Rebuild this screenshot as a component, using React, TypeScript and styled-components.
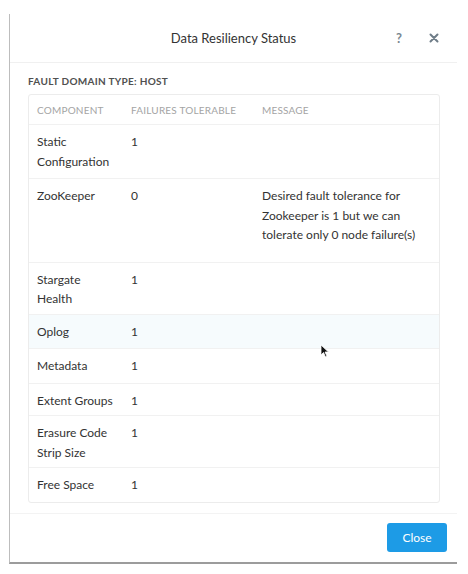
import styled, { createGlobalStyle } from "styled-components";

const GlobalStyle = createGlobalStyle`
  html, body {
    margin: 0;
    padding: 0;
    background: #ffffff;
  }
  body {
    font-family: Lato, "Open Sans", "Liberation Sans", sans-serif;
    color: #333;
  }
`;

const Page = styled.div`
  width: 468px;
  height: 574px;
  padding: 14px 0 0 9px;
  box-sizing: border-box;
`;

const Modal = styled.div`
  width: 448px;
  box-sizing: border-box;
  display: flex;
  flex-direction: column;
  background: #fff;
  border-left: 1px solid #bdbdbd;
  border-bottom: 2px solid #9c9c9c;
`;

const Header = styled.div`
  height: 48px;
  flex: 0 0 48px;
  display: flex;
  align-items: center;
  justify-content: center;
  position: relative;
  border-bottom: 1px solid #f0f0f0;
`;

const Title = styled.div`
  font-size: 13px;
  color: #333;
`;

const HeaderActions = styled.div`
  position: absolute;
  right: 16px;
  top: 0;
  height: 100%;
  display: flex;
  align-items: center;
  gap: 21px;
`;

const IconButton = styled.span`
  font-size: 13px;
  font-weight: 700;
  color: #7b8790;
  width: 14px;
  display: flex;
  justify-content: center;
`;

const Body = styled.div`
  padding: 12px 17px 10px 18px;
  border-bottom: 1px solid #f3f3f3;
`;

const DomainLabel = styled.div`
  font-size: 10px;
  font-weight: 700;
  color: #505050;
  letter-spacing: 0.3px;
  text-transform: uppercase;
  margin-bottom: 7px;
`;

const Table = styled.div`
  border: 1px solid #ececec;
  border-radius: 3px;
  overflow: hidden;
`;

const Row = styled.div<{ $highlight?: boolean; $padBottom?: number }>`
  display: grid;
  grid-template-columns: 94px 131px 1fr;
  padding: 7px 8px ${({ $padBottom }) => $padBottom ?? 7}px 8px;
  background: ${({ $highlight }) => ($highlight ? "#f6fbfd" : "transparent")};
  border-bottom: 1px solid #f1f1f1;
  &:last-child {
    border-bottom: none;
  }
`;

const HeadRow = styled(Row)`
  padding: 9px 8px 7px 8px;
`;

const HeadCell = styled.div`
  font-size: 10px;
  color: #a4a4a4;
  text-transform: uppercase;
  letter-spacing: 0.2px;
  line-height: 13px;
`;

const Cell = styled.div`
  font-size: 12px;
  line-height: 19.5px;
  color: #333;
  padding-right: 14px;
`;

const Footer = styled.div`
  height: 48px;
  flex: 0 0 48px;
  display: flex;
  align-items: center;
  justify-content: flex-end;
  padding-right: 10px;
`;

const CloseButton = styled.button`
  width: 60px;
  height: 29px;
  border: none;
  border-radius: 3px;
  background: #1d9be6;
  color: #fff;
  font-family: inherit;
  font-size: 12px;
`;

const Cursor = styled.svg`
  position: absolute;
  left: 320px;
  top: 344px;
`;

const rows: {
  component: string;
  failures: string;
  message?: string;
  highlight?: boolean;
  padBottom?: number;
}[] = [
  { component: "Static Configuration", failures: "1" },
  {
    component: "ZooKeeper",
    failures: "0",
    message:
      "Desired fault tolerance for Zookeeper is 1 but we can tolerate only 0 node failure(s)",
    padBottom: 17,
  },
  { component: "Stargate Health", failures: "1", padBottom: 5 },
  { component: "Oplog", failures: "1", highlight: true },
  { component: "Metadata", failures: "1" },
  { component: "Extent Groups", failures: "1", padBottom: 5 },
  { component: "Erasure Code Strip Size", failures: "1", padBottom: 5 },
  { component: "Free Space", failures: "1" },
];

export default function App() {
  return (
    <Page>
      <GlobalStyle />
      <Modal>
        <Header>
          <Title>Data Resiliency Status</Title>
          <HeaderActions>
            <IconButton>?</IconButton>
            <IconButton>
              <svg width="10" height="10" viewBox="0 0 10 10">
                <path
                  d="M1.5 1.5 L8.5 8.5 M8.5 1.5 L1.5 8.5"
                  stroke="#6f7d88"
                  strokeWidth="2"
                  strokeLinecap="round"
                />
              </svg>
            </IconButton>
          </HeaderActions>
        </Header>
        <Body>
          <DomainLabel>Fault Domain Type: Host</DomainLabel>
          <Table>
            <HeadRow>
              <HeadCell>Component</HeadCell>
              <HeadCell>Failures Tolerable</HeadCell>
              <HeadCell>Message</HeadCell>
            </HeadRow>
            {rows.map((r) => (
              <Row key={r.component} $highlight={r.highlight} $padBottom={r.padBottom}>
                <Cell>{r.component}</Cell>
                <Cell>{r.failures}</Cell>
                <Cell>{r.message}</Cell>
              </Row>
            ))}
          </Table>
        </Body>
        <Footer>
          <CloseButton>Close</CloseButton>
        </Footer>
      </Modal>
      <Cursor width="10" height="14" viewBox="0 0 10 14">
        <path d="M1 1 L1 11 L3.5 8.5 L5.5 13 L7 12.3 L5 8 L8.5 8 Z" fill="#111" stroke="#fff" strokeWidth="0.8" />
      </Cursor>
    </Page>
  );
}
